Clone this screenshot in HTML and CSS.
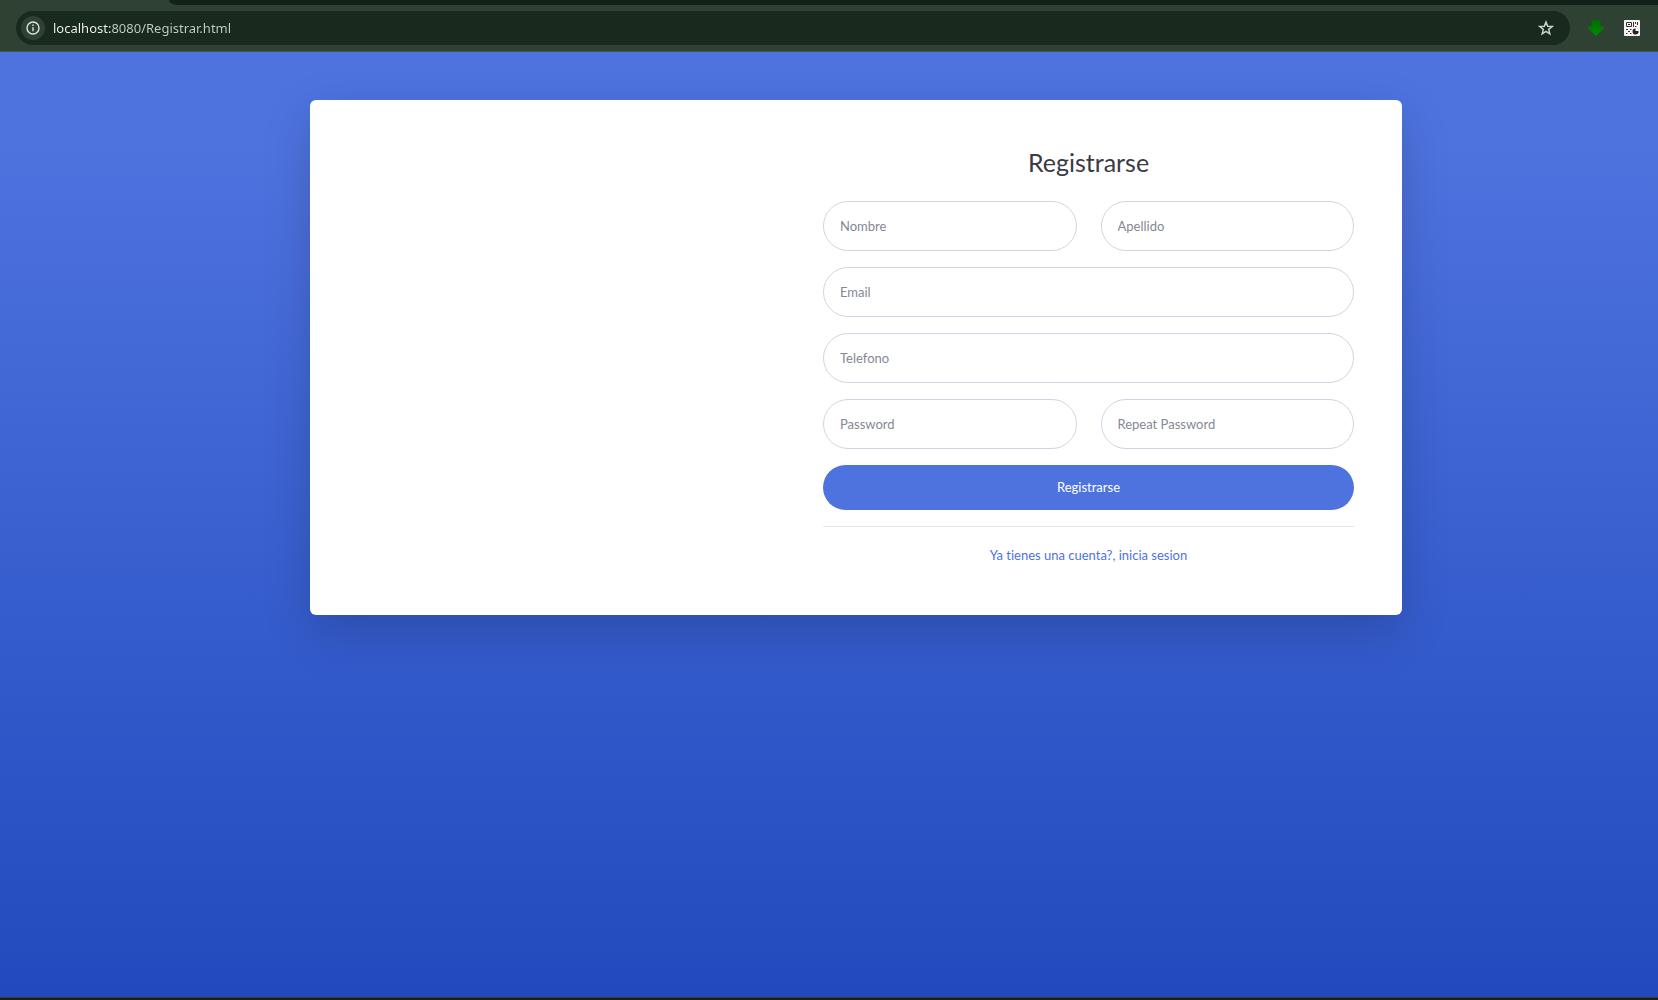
FILE: index.html
```html
<!DOCTYPE html>
<html lang="es">
<head>
<meta charset="utf-8">
<meta name="viewport" content="width=device-width, initial-scale=1">
<title>Registrarse</title>
<link rel="stylesheet" href="styles.css">
</head>
<body>
<header class="browser">
  <div class="tab-strip"><div class="tab-strip-rest"></div></div>
  <div class="toolbar">
    <div class="address-bar">
      <button class="site-info" type="button" aria-label="Información del sitio">
        <svg width="14" height="14" viewBox="0 0 14 14" fill="none" stroke="#dbe5dc" stroke-width="1.4"><circle cx="7" cy="7" r="6"/><path d="M7 6.3v4M7 3.6v1.4"/></svg>
      </button>
      <input class="address" type="text" aria-label="Dirección" value="localhost:8080/Registrar.html">
      <button class="tool" type="button" aria-label="Guardar en favoritos">
        <svg width="16" height="16" viewBox="0 0 16 16" fill="none" stroke="#c9d3ca" stroke-width="1.5"><path d="M8 2l1.700 4.200 4.500.3-3.500 2.900 1.100 4.400L8 11.400l-3.800 2.400 1.100-4.400L1.800 6.500l4.500-.3z"/></svg>
      </button>
    </div>
    <div class="extensions">
      <button class="tool" type="button" aria-label="Descargas">
        <svg width="16" height="16" viewBox="0 0 16 16"><defs><linearGradient id="arrow" x1="0" y1="0" x2="0" y2="1"><stop offset="0" stop-color="#006c00"/><stop offset="1" stop-color="#008c00"/></linearGradient></defs><path fill="url(#arrow)" d="M3.500 0h9v6.500H16v1.500l-8 8-8-8V6.500h3.500z"/></svg>
      </button>
      <button class="tool" type="button" aria-label="Código QR">
        <svg width="16" height="16" viewBox="0 0 16 16"><rect width="16" height="16" rx="1" fill="#f4f4f4"/><path fill="none" stroke="#333" d="M2.500 2.500h5v4h-5zM9.500 2v5M11 6.500h1.500M11.500 2v2M13.500 2v3M2 9.500h2M6 9.500h1.500M4 11.500h2M2 13.500h1.500M6 13.500h1.500"/><path fill="#222" d="M4 4h2v1H4zM11.500 8.500v2.500H14.500a3 3 0 1 1-3-2.500z"/></svg>
      </button>
    </div>
  </div>
</header>
<main class="page">
  <div class="container">
    <div class="card">
      <div class="row">
        <div class="col-image"></div>
        <div class="col-form">
          <h1 class="title">Registrarse</h1>
          <form class="form">
            <div class="pair">
              <input class="field" type="text" placeholder="Nombre" aria-label="Nombre">
              <input class="field" type="text" placeholder="Apellido" aria-label="Apellido">
            </div>
            <input class="field" type="email" placeholder="Email" aria-label="Email">
            <input class="field" type="tel" placeholder="Telefono" aria-label="Telefono">
            <div class="pair">
              <input class="field" type="password" placeholder="Password" aria-label="Password">
              <input class="field" type="password" placeholder="Repeat Password" aria-label="Repeat Password">
            </div>
            <button class="submit" type="submit">Registrarse</button>
          </form>
          <hr class="divider">
          <div class="login"><a class="login-link" href="#login">Ya tienes una cuenta?, inicia sesion</a></div>
        </div>
      </div>
    </div>
  </div>
</main>
<footer class="taskbar"></footer>
</body>
</html>
```

FILE: styles.css
```css
* { box-sizing: border-box; }

body {
  margin: 0;
  min-height: 100vh;
  display: flex;
  flex-direction: column;
  font-family: Lato, "Open Sans", sans-serif;
  font-size: 13px;
  font-variant-ligatures: none;
}

button { border: 0; cursor: pointer; }

/* Browser bar */
.browser {
  background: #2f4132;
  border-bottom: 1px solid #455548;
}
.tab-strip { padding-left: 169px; }
.tab-strip-rest {
  height: 5px;
  background: #142118;
  border-bottom-left-radius: 8px 5px;
}
.toolbar {
  display: flex;
  align-items: center;
  gap: 18px;
  padding: 6px 18px 6px 16px;
}
.address-bar {
  flex: 1;
  display: flex;
  align-items: center;
  height: 34px;
  padding: 0 16px 0 5px;
  border-radius: 17px;
  background: #1a291d;
}
.site-info {
  display: grid;
  place-items: center;
  width: 24px;
  height: 24px;
  padding: 0;
  border-radius: 50%;
  background: #2f4132;
}
.address {
  flex: 1;
  min-width: 0;
  margin-left: 8px;
  padding: 0;
  border: 0;
  outline: 0;
  font-family: "Noto Sans", sans-serif;
  font-size: 13px;
  line-height: 20px;
  color: transparent;
  background: linear-gradient(90deg, #f0f7f1 58px, #c3d0c5 58px);
  background-clip: text;
}
.tool {
  display: grid;
  place-items: center;
  padding: 0;
  background: none;
}
.extensions { display: flex; gap: 20px; }

/* Page */
.page {
  flex: 1;
  padding: 48px 0 48px 54px;
  background: linear-gradient(180deg, #4e73df 10%, #224abe 100%);
}
.container {
  max-width: 1140px;
  margin: 0 auto;
  padding: 0 24px;
}
.card {
  overflow: hidden;
  border-radius: 6px;
  background: #fff;
  box-shadow: 0 16px 48px rgba(0, 0, 0, .175);
}
.row {
  display: grid;
  grid-template-columns: 5fr 7fr;
  margin: 0 -12px;
}
.col-form { padding: 48px 60px; }
.title {
  margin: 0 0 24px;
  font-size: 25px;
  font-weight: 400;
  line-height: 29px;
  text-align: center;
  color: #3a3b45;
}
.form {
  display: flex;
  flex-direction: column;
  gap: 16px;
}
.pair {
  display: grid;
  grid-template-columns: 1fr 1fr;
  gap: 24px;
}
.field {
  width: 100%;
  height: 50px;
  padding: 0 16px;
  border: 1px solid #d1d3e2;
  border-radius: 25px;
  font: inherit;
  color: #6e707e;
  background: #fff;
}
.field::placeholder { color: #858796; opacity: 1; }
.submit {
  height: 45px;
  padding: 0 16px 2px;
  border-radius: 23px;
  font: inherit;
  color: #fff;
  background: #4e73df;
}
.divider {
  margin: 16px 0;
  border: 0;
  border-top: 1px solid #e5e5e5;
}
.login { line-height: 24px; text-align: center; }
.login-link { color: #4e73df; text-decoration: none; }

.taskbar {
  height: 3px;
  border-top: 1px solid #3c3c3c;
  background: #1c1c1c;
}
```
